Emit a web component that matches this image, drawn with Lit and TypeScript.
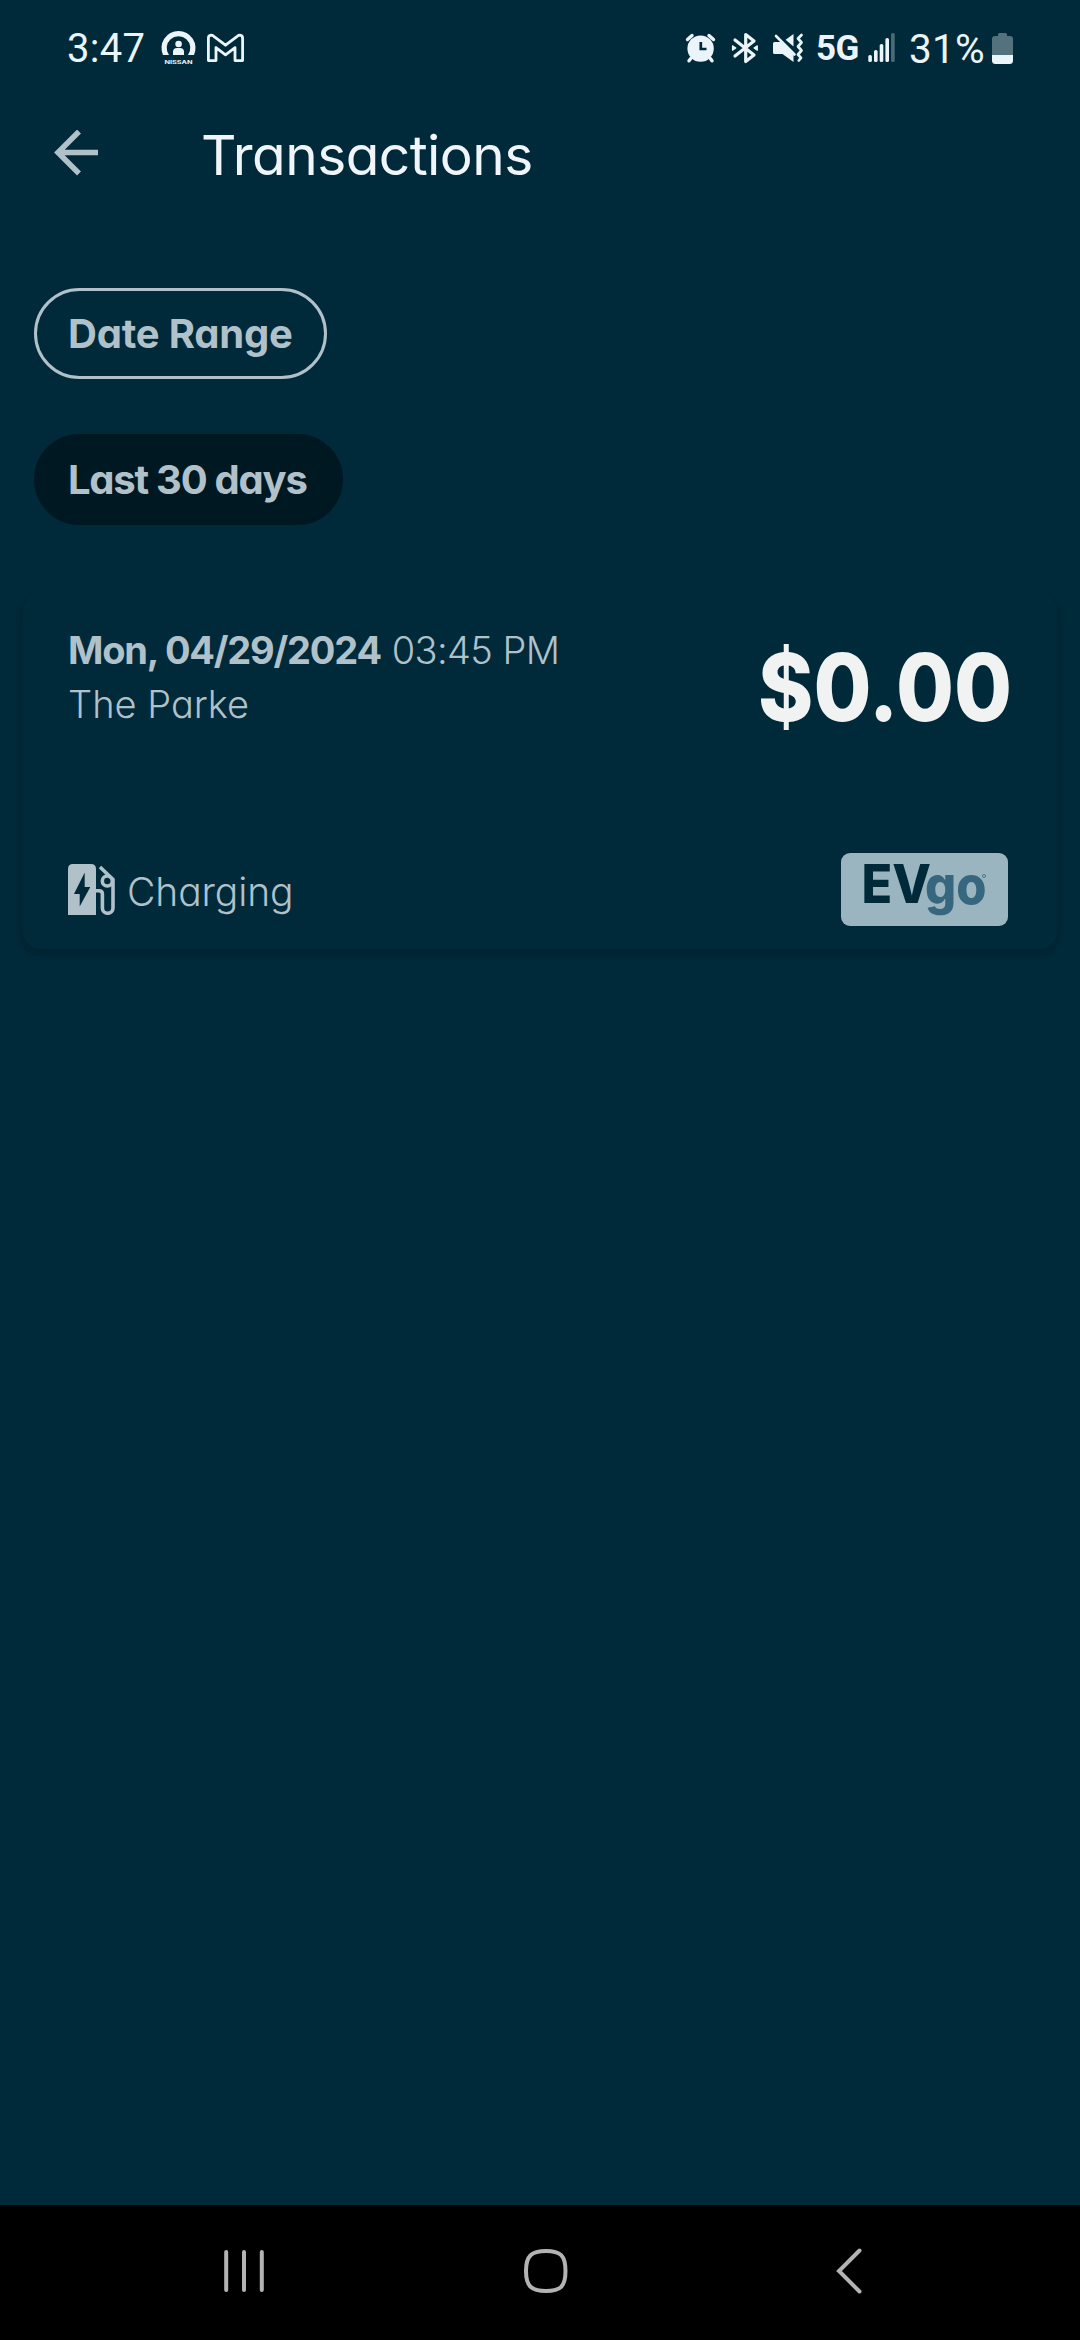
import { LitElement, html, css } from "lit";
import { customElement } from "lit/decorators.js";

@customElement("status-bar")
class StatusBar extends LitElement {
  static styles = css`
    :host { display: flex; align-items: center; height: 96px; padding: 0 67px 0 67px; box-sizing: border-box; color: #ebf4f8; font-family: Roboto, sans-serif; }
    svg { display: block; flex: none; overflow: visible; }
    .time { font-size: 40px; line-height: 96px; width: 94px; padding-top: 1px; letter-spacing: 0.3px; }
    .nissan { margin-right: 12px; }
    .maker { font: 700 4.8px Inter, sans-serif; }
    .gap { flex: 1; }
    .spaced { margin-left: 14.5px; }
    .net { font-size: 35px; font-weight: 700; line-height: 96px; width: 52px; margin-left: 12px; padding-top: 2px; letter-spacing: -0.6px; }
    .pct { font-size: 40.5px; line-height: 96px; padding-top: 1px; width: 83px; margin-left: 14px; letter-spacing: 0.3px; }
  `;
  render() {
    return html`
      <span class="time">3:47</span>
      <svg class="nissan" width="34" height="36" viewBox="161 31 34 36" fill="#ebf4f8">
        <path d="M163 56A17 17 0 1 1 194 56H188A11.8 11.8 0 1 0 169 56Z" />
        <circle cx="178.6" cy="45" r="3.3" />
        <path d="M173 56v-3q0-4 4-4h3q4 0 4 4v3z" />
        <text class="maker" x="164.5" y="65" textLength="28" lengthAdjust="spacingAndGlyphs">NISSAN</text>
      </svg>
      <svg width="37" height="30" viewBox="207 33 37 30" fill="none" stroke="#ebf4f8" stroke-width="2.8" stroke-linejoin="round">
        <path d="M208.4 38.2Q208.4 35.4 211 35.2Q212.5 35.2 213.8 36.3L225.5 45.2L237.2 36.3Q238.5 35.2 240 35.2Q242.6 35.4 242.6 38.2V60.6H235V47.6L225.5 54.8L216 47.6V60.6H208.4Z" />
      </svg>
      <span class="gap"></span>
      <svg width="30" height="32" viewBox="686 32 30 32">
        <circle cx="700.6" cy="48.6" r="13.2" fill="#ebf4f8" />
        <path d="M687.5 39.5L692 35.5M713.5 39.5L709 35.5M690.8 58.5L689 60.8M710.3 58.5L712 60.8" stroke="#ebf4f8" stroke-width="3.4" stroke-linecap="round" />
        <path d="M700.8 42V49H706.5" fill="none" stroke="#002a3a" stroke-width="2.7" />
      </svg>
      <svg class="spaced" width="28" height="34" viewBox="730.5 31 28 34" fill="none" stroke="#ebf4f8" stroke-width="3.2" stroke-linejoin="round" stroke-linecap="round">
        <path d="M734.5 40L753.5 55L745.2 61.5V34.5L753.5 41L734.5 56" />
        <path d="M732 45.8L735.3 48L732 50.2ZM756.8 45.8L753.5 48L756.8 50.2Z" fill="#ebf4f8" stroke-width="1.2" />
      </svg>
      <svg class="spaced" width="31" height="32" viewBox="773 32 31 32" fill="#ebf4f8">
        <path d="M774.5 42H781L793.5 53.8V62L782.5 54H774.5Q773 54 773 52.5V43.5Q773 42 774.5 42Z" />
        <path d="M793.5 34V46.5L785.6 39.8Z" />
        <path d="M776 36L794.5 54.5" stroke="#ebf4f8" stroke-width="2.6" stroke-linecap="round" />
        <path d="M801.5 35L798 38.5L801.5 42.5L798 46.5L801.5 50.5L798 54.5L801 57.8L798.8 60.5" fill="none" stroke="#ebf4f8" stroke-width="2.7" stroke-linecap="round" stroke-linejoin="round" />
      </svg>
      <span class="net">5G</span>
      <svg width="27" height="30" viewBox="868 33 27 30" fill="#ebf4f8">
        <rect x="868.3" y="55" width="3.6" height="7" rx="1.6" />
        <rect x="874" y="50" width="3.6" height="12" rx="1.6" />
        <rect x="879.7" y="44" width="3.6" height="18" rx="1.6" />
        <rect x="885.4" y="38" width="3.6" height="24" rx="1.6" />
        <rect x="891.1" y="33" width="3.6" height="29" rx="1.6" fill="#4b6b79" />
      </svg>
      <span class="pct">31%</span>
      <svg width="21" height="32" viewBox="992 32 21 32">
        <path d="M998 36V34.5Q998 33 999.5 33H1005.5Q1007 33 1007 34.5V36H1010Q1013 36 1013 39V55H992V39Q992 36 995 36Z" fill="#54717e" />
        <path d="M992 55H1013V60.5Q1013 64 1009.5 64H995.5Q992 64 992 60.5Z" fill="#ebf4f8" />
      </svg>
    `;
  }
}

@customElement("transaction-card")
class TransactionCard extends LitElement {
  static styles = css`
    :host { display: flex; flex-direction: column; justify-content: space-between; box-sizing: border-box; height: 356px; margin: 0 23px; padding: 30px 49px 23px 45px; border-radius: 18px; background: #002a3a; box-shadow: 0 4px 12px rgba(0, 10, 16, 0.28); color: #b0c1ca; }
    .row { display: flex; justify-content: space-between; }
    .info { font-size: 38px; line-height: 54px; white-space: nowrap; }
    .day { font-weight: 700; letter-spacing: -1.2px; }
    .hour { letter-spacing: -0.6px; font-weight: 350; }
    .place { letter-spacing: 0; font-weight: 350; }
    .price { font: 800 93.5px Inter, sans-serif; fill: #f1f2f2; }
    .amount { margin-right: -5px; overflow: visible; }
    .kind { display: flex; align-items: center; font-size: 39px; font-weight: 350; gap: 12px; letter-spacing: -0.1px; }
    .label { padding-top: 4px; }
    .badge { background: #9bb5c0; border-radius: 9px; width: 167px; height: 73px; }
    .brand { font: 800 53px Inter, sans-serif; fill: #002a3a; }
    .go { fill: #37677f; }
    svg { display: block; flex: none; }
  `;
  render() {
    return html`
      <div class="row">
        <div class="info">
          <div><span class="day">Mon, 04/29/2024</span> <span class="hour">03:45 PM</span></div>
          <div class="place">The Parke</div>
        </div>
        <svg class="amount" width="256" height="122" viewBox="0 0 256 122">
          <text class="price" x="1" y="98" textLength="254" lengthAdjust="spacingAndGlyphs">$0.00</text>
        </svg>
      </div>
      <div class="row">
        <div class="kind">
          <svg width="47" height="51" viewBox="0 0 47 51">
            <path fill="#b0c1ca" fill-rule="evenodd" d="M5 0H23Q28 0 28 5V51H0V5Q0 0 5 0ZM16.7 8.5L6 30H11.7V42.5L22.3 23H16.7Z" />
            <path d="M32 3L45 15.5V44A5.3 5.3 0 0 1 34.4 44V30Q34.4 26.7 31 26.7H28" fill="none" stroke="#b0c1ca" stroke-width="3.6" />
            <circle cx="39.3" cy="17" r="5" fill="none" stroke="#b0c1ca" stroke-width="3.6" />
          </svg>
          <span class="label">Charging</span>
        </div>
        <div class="badge">
          <svg width="167" height="73" viewBox="0 0 167 73">
            <text class="brand go" x="84" y="50.5" textLength="61.5" lengthAdjust="spacingAndGlyphs">go</text>
            <text class="brand" x="20.5" y="49.5" textLength="69.5" lengthAdjust="spacingAndGlyphs">EV</text>
            <circle cx="143" cy="23" r="1.5" fill="none" stroke="#37677f" stroke-width="0.8" />
          </svg>
        </div>
      </div>
    `;
  }
}

@customElement("app-root")
class AppRoot extends LitElement {
  static styles = css`
    :host { display: flex; flex-direction: column; width: 1080px; height: 2340px; background: #002a3a; font-family: Inter, sans-serif; font-feature-settings: "cv11"; overflow: hidden; }
    svg { display: block; }
    .header { display: flex; align-items: center; height: 114px; padding: 0 54px; gap: 101px; }
    .title { font-size: 55px; line-height: 114px; color: #eff5f9; letter-spacing: -0.55px; padding-top: 4px; }
    .filters { display: flex; flex-direction: column; align-items: flex-start; gap: 55px; padding: 78px 34px 68px; }
    .chip { box-sizing: border-box; height: 91px; padding: 0 31px; border: 3px solid #b0c1ca; border-radius: 46px; font-size: 40px; font-weight: 700; line-height: 85px; color: #b0c1ca; letter-spacing: -0.2px; white-space: nowrap; width: 293px; }
    .chip.on { background: #001821; border-color: #001821; width: 309px; letter-spacing: -1.25px; }
    .list { flex: 1; }
    .nav { display: flex; align-items: center; justify-content: space-between; height: 135px; box-sizing: border-box; padding: 0 217px 3px 223px; background: #000; }
    .home { margin-right: 8px; }
  `;
  render() {
    return html`
      <status-bar></status-bar>
      <div class="header">
        <svg width="46" height="46" viewBox="54 130 46 46" fill="none" stroke="#b0c1ca" stroke-width="5.5">
          <path d="M98 152.5H58M79 131.500L58 152.5L79 173.500" />
        </svg>
        <span class="title">Transactions</span>
      </div>
      <div class="filters">
        <span class="chip">Date Range</span>
        <span class="chip on">Last 30 days</span>
      </div>
      <div class="list"><transaction-card></transaction-card></div>
      <div class="nav">
        <svg width="41" height="46" viewBox="223 2248 41 46" stroke="#b3b3b3" stroke-width="4" stroke-linecap="round">
          <path d="M226.2 2252V2290M244 2252V2290M261.8 2252V2290" />
        </svg>
        <svg class="home" width="46" height="46" viewBox="523 2248 46 46" fill="none" stroke="#b3b3b3" stroke-width="4">
          <path d="M546 2251C560.5 2251 565.5 2255.5 565.5 2271S560.5 2291 546 2291S526 2286.5 526 2271S531.5 2251 546 2251Z" />
        </svg>
        <svg width="27" height="48" viewBox="836 2247 27 48" fill="none" stroke="#b3b3b3" stroke-width="4" stroke-linecap="round">
          <path d="M859.5 2250.5L839 2271L859.5 2291.5" />
        </svg>
      </div>
    `;
  }
}
